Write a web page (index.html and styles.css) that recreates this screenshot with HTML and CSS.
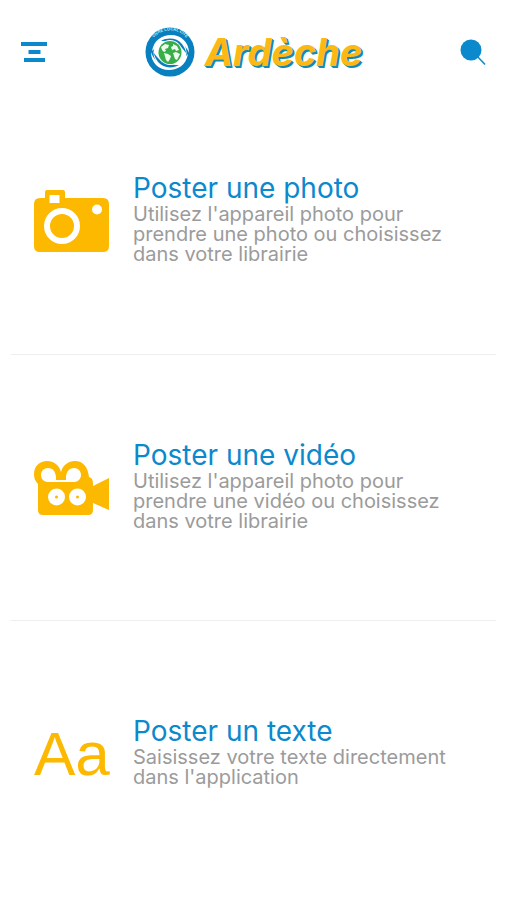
FILE: index.html
```html
<!DOCTYPE html>
<html lang="fr">
<head>
<meta charset="utf-8">
<meta name="viewport" content="width=device-width, initial-scale=1">
<title>Ardèche</title>
<link rel="stylesheet" href="styles.css">
</head>
<body>
<header class="topbar">
  <button class="icon-button" type="button" aria-label="Menu">
    <svg width="28" height="22" viewBox="0 0 28 22"><path d="M1 3h26M8.500 11h12M4 19h21" stroke="#0b89cd" stroke-width="4"/></svg>
  </button>
  <a class="brand" href="#">
    <svg width="50" height="50" viewBox="0 0 50 50" aria-hidden="true">
      <circle cx="25" cy="25" r="24.500" fill="#087fbe"/>
      <circle cx="25" cy="25.500" r="16.500" fill="#fff"/>
      <path d="M7 24C9 13 17 8 26 8c10 0 18 7 18 18-3-8-10-14-18-15-7 0-11 3-14 8z" fill="#fff"/>
      <path d="M43 27c-2 11-10 16-19 16C14 43 6 36 6 25c3 9 10 14 18 15 7 0 11-3 14-8z" fill="#fff"/>
      <path id="arc" d="M7 13A21.500 21.500 0 0 1 43 13" fill="none"/>
      <text class="brand-ring"><textPath href="#arc" startOffset="50%">VIVRE LOCAL CITÉ</textPath></text>
      <path d="M16 14c7-4 16-3 21 3 2 3 4 6 4 9-4-6-8-9-13-10-4-2-8-2-12-2zM34 38c-7 4-16 3-21-3-2-3-4-6-4-9 4 6 8 9 13 10 4 2 8 2 12 2z" fill="#087fbe"/>
      <circle cx="25" cy="25.500" r="12.500" fill="#fff"/>
      <circle cx="25" cy="25.500" r="11.500" fill="#38ae49"/>
      <path d="M16 20l4-3 4 1-1 3-3 1 1 2-2 1-2-2zM19 26l4 1 3 2-1 3-2 3-2-2zM28 17l4 2 2 4-3 1-1-2-3 1-1-3 2-1zM28 26l3-1 4 2-3 6-2-1z" fill="#eefaed"/>
    </svg>
    <span class="brand-name">Ardèche</span>
  </a>
  <button class="icon-button" type="button" aria-label="Rechercher">
    <svg width="28" height="28" viewBox="0 0 28 28"><circle cx="12" cy="12" r="10.500" fill="#0b89cd"/><path d="M18 18l8 8.500" stroke="#0b89cd" stroke-width="1.500"/></svg>
  </button>
</header>
<main class="choices">
  <a class="choice" href="#">
    <svg class="choice-icon" viewBox="0 0 75 62" aria-hidden="true">
      <path fill="#fcb900" fill-rule="evenodd" d="M11 8V2q0-2 2-2h16q2 0 2 2v6h38q6 0 6 6v42q0 6-6 6H6q-6 0-6-6V14q0-6 6-6zM15.500 5v8h10V5zM28 18a18 18 0 1 0 0 36a18 18 0 1 0 0-36zM28 24a12 12 0 1 1 0 24a12 12 0 1 1 0-24zM63 14.500a5 5 0 1 0 0 10a5 5 0 1 0 0-10z"/>
    </svg>
    <div class="choice-text">
      <h2 class="choice-title">Poster une photo</h2>
      <p class="choice-hint">Utilisez l'appareil photo pour prendre une photo ou choisissez dans votre librairie</p>
    </div>
  </a>
  <a class="choice" href="#">
    <svg class="choice-icon" viewBox="0 0 75 54" aria-hidden="true">
      <path fill="#fcb900" d="M13 0C20 0 25 4 27 11 29 4 34 0 41 0c8 0 13 6 14 16 3 1 4 3 4 7v2L75 17v32L59 42v7q0 5-5 5H9q-5 0-5-5V23C1 20 0 17 0 13 0 5 6 0 13 0z"/>
      <path fill="#fff" d="M14 7c5 0 8 4 8 10v4h-8c-4 0-7-3-7-7s3-7 7-7zM40 7c4 0 7 3 7 7s-3 7-7 7h-8v-4c0-6 3-10 8-10zM22 19h11v2H22z"/>
      <circle cx="22.500" cy="36" r="8.500" fill="#fff"/><circle cx="43.500" cy="36" r="8.500" fill="#fff"/>
      <circle cx="22.500" cy="36" r="1.500" fill="#fcb900"/><circle cx="43.500" cy="36" r="1.500" fill="#fcb900"/>
    </svg>
    <div class="choice-text">
      <h2 class="choice-title">Poster une vidéo</h2>
      <p class="choice-hint">Utilisez l'appareil photo pour prendre une vidéo ou choisissez dans votre librairie</p>
    </div>
  </a>
  <a class="choice" href="#">
    <span class="choice-icon letters" aria-hidden="true">Aa</span>
    <div class="choice-text">
      <h2 class="choice-title">Poster un texte</h2>
      <p class="choice-hint">Saisissez votre texte directement dans l'application</p>
    </div>
  </a>
</main>
</body>
</html>
```
FILE: styles.css
```css
* { box-sizing: border-box; }

body {
  margin: 0;
  background: #fff;
  font-family: Inter, "Liberation Sans", sans-serif;
}

a { color: inherit; text-decoration: none; }
svg { display: block; flex: none; }

.topbar {
  display: flex;
  align-items: center;
  justify-content: space-between;
  padding: 16px 20px 0;
  height: 88px;
}

.icon-button {
  padding: 0;
  border: 0;
  background: none;
  cursor: pointer;
}

.brand {
  display: flex;
  align-items: center;
  gap: 10px;
}

.brand-name {
  color: #fdb913;
  font: italic 700 38px/46px Inter, sans-serif;
  text-shadow: 1px 1px #118bb5, 2px 2px #118bb5;
}

.brand-ring {
  fill: #d5ebf6;
  font: 700 4px "Liberation Sans", sans-serif;
  text-anchor: middle;
}

.choices { padding: 0 11px; }

.choice {
  display: flex;
  align-items: center;
  gap: 24px;
  min-height: 266px;
  padding: 0 24px 0 23px;
}

.choice + .choice { border-top: 1px solid #eee; }

.choice-icon {
  flex: none;
  width: 75px;
}

.letters {
  color: #fcb900;
  font: 62px/68px "Liberation Sans", sans-serif;
}

.choice-text {
  min-width: 0;
  padding-bottom: 2px;
}

.choice-title,
.choice-hint {
  margin: 0;
  font-weight: 400;
}

.choice-title {
  margin-bottom: 4px;
  color: #0b89cd;
  font-size: 28px;
  line-height: 24px;
}

.choice-hint {
  color: #9b9b9b;
  font-size: 20px;
  line-height: 20px;
}
```
